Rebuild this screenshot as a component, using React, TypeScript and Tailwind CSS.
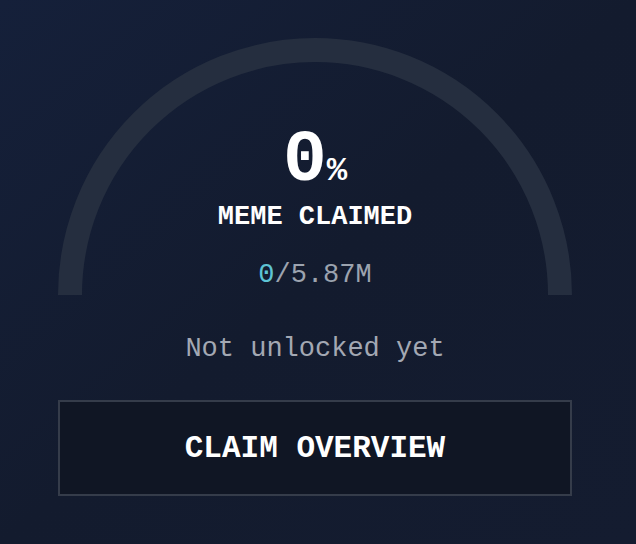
import React from "react";

const mono = { fontFamily: '"Liberation Mono", "DejaVu Sans Mono", monospace' };

function Gauge({ percent }: { percent: number }) {
	// half ring, 514 wide, ends flat at the bottom
	const r = 245;
	const len = Math.PI * r;
	return (
		<svg width="514" height="257" viewBox="0 0 514 257" className="absolute left-0 top-0">
			<path d="M 12 257 A 245 245 0 0 1 502 257" fill="none" stroke="#252e3f" strokeWidth="24" />
			{percent > 0 && (
				<path
					d="M 12 257 A 245 245 0 0 1 502 257"
					fill="none"
					stroke="#5ec4d4"
					strokeWidth="24"
					strokeDasharray={`${(len * percent) / 100} ${len}`}
				/>
			)}
		</svg>
	);
}

export default function App() {
	return (
		<div
			className="w-[636px] h-[544px] bg-gradient-to-br from-[#15203a] via-[#131b2e] to-[#141c30] text-white"
			style={mono}
		>
			<div className="pl-[58px] pr-[64px] pt-[38px]">
				<div className="relative w-[514px] h-[257px]">
					<Gauge percent={0} />
					<div className="relative flex flex-col items-center pt-[86px]">
						<div className="flex items-baseline font-bold">
							<span className="text-[73px] leading-none">0</span>
							<span className="text-[34px] leading-none">%</span>
						</div>
						<p className="mt-[7px] text-[27px] font-bold leading-none">MEME CLAIMED</p>
						<p className="mt-[31px] text-[27px] leading-none text-[#9ca3af]">
							<span className="text-[#5ec4d4]">0</span>/5.87M
						</p>
					</div>
				</div>
				<p className="mt-[41px] text-center text-[27px] leading-none text-[#a3a8b3]">Not unlocked yet</p>
				<button className="mt-[37px] flex h-[96px] w-[514px] items-center justify-center border-2 border-[#353c4a] bg-[#101624] pt-[3px] text-[31px] font-bold text-white">
					CLAIM OVERVIEW
				</button>
			</div>
		</div>
	);
}
